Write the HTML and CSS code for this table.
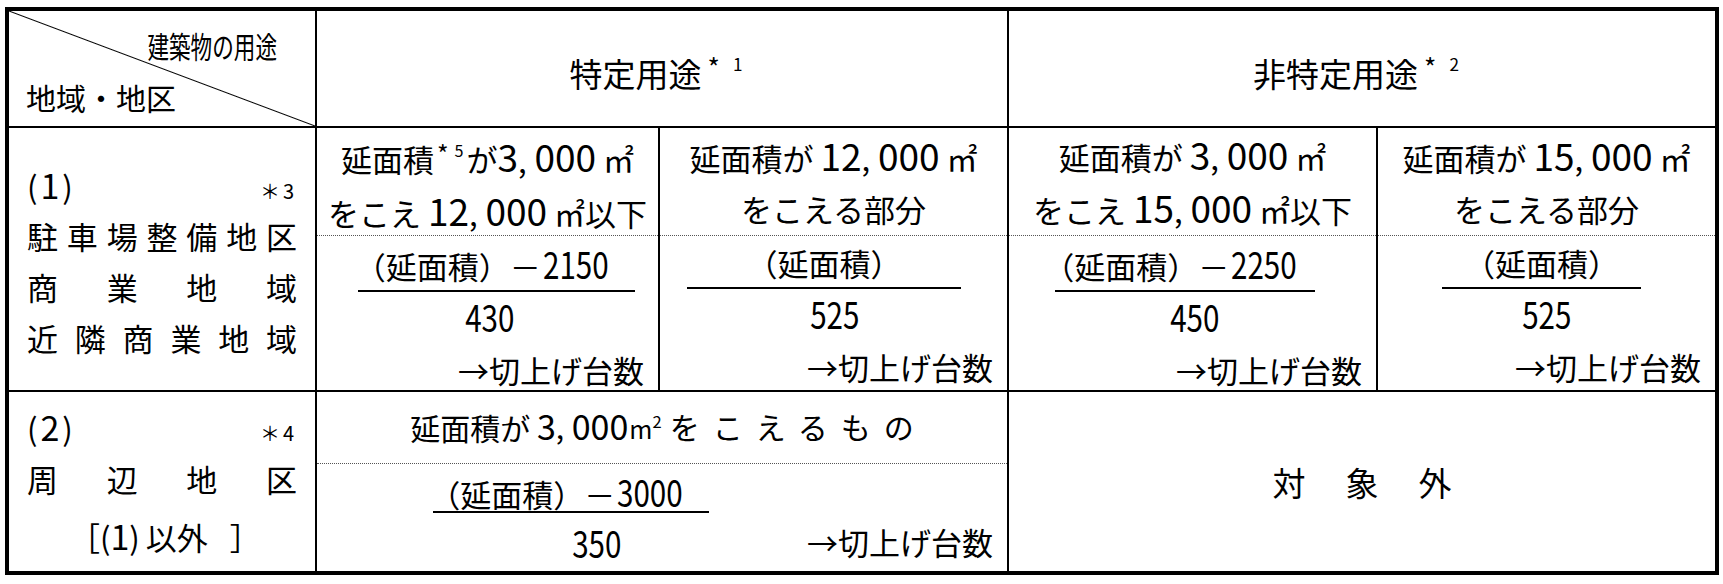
FILE: index.html
```html
<!DOCTYPE html>
<html lang="ja">
<head>
<meta charset="utf-8">
<title>駐車場附置台数</title>
<link rel="stylesheet" href="styles.css">
</head>
<body>
<div class="sheet">
  <div class="cell corner">
    <div class="corner-top"><span>建築物の用途</span></div>
    <div class="corner-bottom">地域・地区</div>
  </div>
  <div class="cell head span2"><span>特定用途<span class="ast">*</span><span class="sup">1</span></span></div>
  <div class="cell head span2"><span>非特定用途<span class="ast">*</span><span class="sup">2</span></span></div>

  <div class="cell zone zone-1">
    <div class="zone-no"><span class="zn">(<span class="n">1</span>)</span><span class="note">＊3</span></div>
    <div class="jline">駐車場整備地区</div>
    <div class="jline">商業地域</div>
    <div class="jline">近隣商業地域</div>
  </div>
  <div class="cell calc">
    <div class="calc-top">
      <div class="tl">延面積<span class="ast">*</span><span class="sup">5</span>が<span class="n">3</span><span class="cm">,</span><span class="n">000</span> ㎡</div>
      <div class="tl">をこえ <span class="n">12</span><span class="cm">,</span><span class="n">000</span> ㎡以下</div>
    </div>
    <div class="calc-bottom">
      <div class="frac f1">
        <div class="num shift">（延面積）－<span class="n">2150</span></div>
        <div class="bar"></div>
        <div class="den">430</div>
      </div>
      <div class="arrow">→切上げ台数</div>
    </div>
  </div>
  <div class="cell calc">
    <div class="calc-top">
      <div class="tl">延面積が <span class="n">12</span><span class="cm">,</span><span class="n">000</span> ㎡</div>
      <div class="tl">をこえる部分</div>
    </div>
    <div class="calc-bottom">
      <div class="frac f2">
        <div class="num">（延面積）</div>
        <div class="bar"></div>
        <div class="den">525</div>
      </div>
      <div class="arrow">→切上げ台数</div>
    </div>
  </div>
  <div class="cell calc">
    <div class="calc-top">
      <div class="tl">延面積が <span class="n">3</span><span class="cm">,</span><span class="n">000</span> ㎡</div>
      <div class="tl">をこえ <span class="n">15</span><span class="cm">,</span><span class="n">000</span> ㎡以下</div>
    </div>
    <div class="calc-bottom">
      <div class="frac f3">
        <div class="num shift">（延面積）－<span class="n">2250</span></div>
        <div class="bar"></div>
        <div class="den">450</div>
      </div>
      <div class="arrow">→切上げ台数</div>
    </div>
  </div>
  <div class="cell calc">
    <div class="calc-top">
      <div class="tl">延面積が <span class="n">15</span><span class="cm">,</span><span class="n">000</span> ㎡</div>
      <div class="tl">をこえる部分</div>
    </div>
    <div class="calc-bottom">
      <div class="frac f4">
        <div class="num">（延面積）</div>
        <div class="bar"></div>
        <div class="den">525</div>
      </div>
      <div class="arrow">→切上げ台数</div>
    </div>
  </div>

  <div class="cell zone zone-2">
    <div class="zone-no"><span class="zn">(<span class="n">2</span>)</span><span class="note">＊4</span></div>
    <div class="jline">周辺地区</div>
    <div class="zone-sub">［(<span class="n">1</span>)<span class="ex">以外</span><span class="close">］</span></div>
  </div>
  <div class="cell calc span2">
    <div class="calc-top r3-top">
      <div class="tl">延面積が <span class="n">3</span><span class="cm">,</span><span class="n">000</span><span class="unit">m</span><span class="sq">2</span><span class="wide">をこえるもの</span></div>
    </div>
    <div class="calc-bottom r3-bottom">
      <div class="frac f5">
        <div class="num shift">（延面積）－<span class="n">3000</span></div>
        <div class="bar"></div>
        <div class="den">350</div>
      </div>
      <div class="arrow">→切上げ台数</div>
    </div>
  </div>
  <div class="cell outside span2"><span>対象外</span></div>
</div>
</body>
</html>
```

FILE: styles.css
```css
* {
  box-sizing: border-box;
  margin: 0;
  padding: 0;
}

html,
body {
  background: #fff;
}

body {
  font-family: "Noto Sans CJK JP", "Noto Sans", sans-serif;
  color: #000;
  padding: 7px 4px 0 5px;
}

.sheet {
  display: grid;
  grid-template-columns: 306px 341px 347px 367px 337px;
  grid-template-rows: 115px 262px 179px;
  gap: 2px;
  width: 1714px;
  border: 4px solid #000;
  background: #000;
}

.cell {
  background: #fff;
  min-width: 0;
}

.span2 {
  grid-column: span 2;
}

/* header corner with diagonal */
.corner {
  display: flex;
  flex-direction: column;
  background: #fff linear-gradient(to top right, transparent calc(50% - 1px), #000 50%, transparent calc(50% + 1px));
  font-size: 30px;
  line-height: 30px;
}

.corner-top {
  padding-top: 19px;
  padding-right: 38px;
  text-align: right;
}

.corner-top span {
  display: inline-block;
  transform: scaleX(0.72);
  transform-origin: right center;
}

.corner-bottom {
  margin-top: 22px;
  padding-left: 17px;
}

.head {
  display: flex;
  align-items: center;
  justify-content: center;
  padding-top: 8px;
  font-size: 33px;
}

.ast {
  font-size: 0.8em;
  vertical-align: 0.35em;
  margin-left: 3px;
}

.sup {
  font-size: 0.52em;
  vertical-align: 0.95em;
  margin-left: 6px;
  margin-right: 3px;
}

.head .ast {
  margin-left: 6px;
}

.head .sup {
  margin-left: 13px;
  margin-right: 12px;
}

.cm {
  margin-right: 0.25em;
}

/* zone column */
.zone {
  padding: 0 18px;
  font-size: 31px;
  line-height: 51px;
}

.zone-1 {
  padding-top: 31px;
}

.zone-2 {
  padding-top: 9px;
}

.zone-no {
  display: flex;
  justify-content: space-between;
  align-items: baseline;
  height: 51px;
}

.zn {
  letter-spacing: 3px;
}

.zone-no .n {
  font-size: 34px;
}

.note {
  font-size: 20px;
  letter-spacing: 3px;
}

.jline {
  text-align: justify;
  text-align-last: justify;
}

.zone-2 .jline {
  margin-top: 1px;
}

.zone-sub {
  margin-top: 6px;
  padding-left: 42px;
  white-space: nowrap;
}

.zone-sub .n {
  font-size: 34px;
}

.ex {
  margin-left: 6px;
}

.close {
  margin-left: 22px;
}

/* calculation cells */
.calc {
  display: flex;
  flex-direction: column;
  font-size: 31px;
}

.calc-top {
  height: 108px;
  border-bottom: 1px dotted #555;
  display: flex;
  flex-direction: column;
  justify-content: center;
  align-items: center;
  line-height: 51px;
  white-space: nowrap;
}

.tl .n {
  font-size: 37px;
}

.calc-bottom {
  flex: 1;
  display: flex;
  flex-direction: column;
}

.frac {
  display: flex;
  flex-direction: column;
  align-items: center;
  margin-top: 10px;
  line-height: 34px;
  white-space: nowrap;
}

.num .n {
  display: inline-block;
  font-size: 37px;
  margin-left: 2px;
  margin-right: -0.4em;
  transform: scaleX(0.8);
  transform-origin: left center;
}

.shift {
  margin-right: 28px;
}

.bar {
  align-self: stretch;
  height: 2px;
  margin-top: 7px;
  background: #000;
}

.den {
  margin-top: 7px;
  line-height: 34px;
  font-size: 37px;
  transform: scaleX(0.8);
}

.f1 .den { margin-right: 14px; }
.f2 .den { margin-left: 22px; }
.f3 .den { margin-left: 20px; }
.f4 .den { margin-left: 10px; }

.arrow {
  margin-top: 20px;
  padding-right: 14px;
  line-height: 34px;
  text-align: right;
  white-space: nowrap;
}

.f1 { width: 277px; margin-left: 41px; }
.f2 { width: 274px; margin-left: 27px; }
.f3 { width: 260px; margin-left: 46px; }
.f4 { width: 199px; margin-left: 64px; }
.f5 { width: 276px; margin-left: 116px; }

/* row 3 */
.r3-top {
  height: 75px;
  padding-bottom: 5px;
  font-size: 30px;
}

.r3-top .n {
  font-size: 34px;
}

.unit {
  font-size: 25px;
  margin-left: 1px;
}

.sq {
  font-size: 0.55em;
  vertical-align: 0.7em;
  margin-right: 8px;
}

.wide {
  letter-spacing: 13px;
  margin-right: -13px;
}

.r3-bottom {
  flex-direction: row;
  align-items: flex-end;
  padding-bottom: 12px;
}

.r3-bottom .frac {
  margin-top: 10px;
}

.r3-bottom .bar {
  margin-top: 0;
}

.r3-bottom .den {
  margin-top: 12px;
  margin-left: 52px;
}

.r3-bottom .arrow {
  margin-left: auto;
  margin-top: 0;
}

.outside {
  display: flex;
  align-items: center;
  justify-content: center;
  font-size: 33px;
  letter-spacing: 40px;
  padding-left: 40px;
}
```
